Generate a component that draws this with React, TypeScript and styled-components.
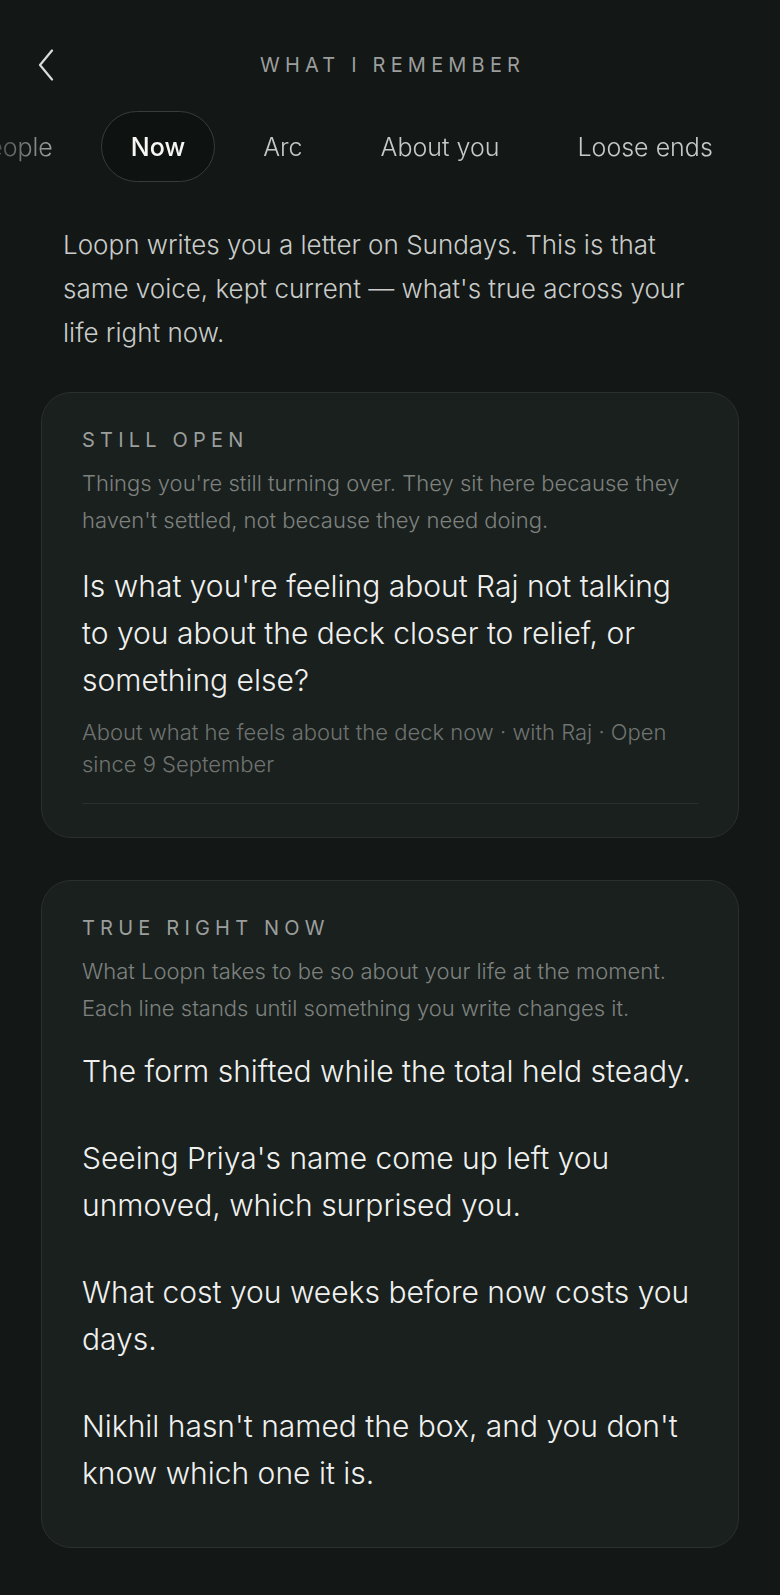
import { useLayoutEffect, useRef } from 'react';
import styled, { createGlobalStyle } from 'styled-components';

const COLORS = {
  bg: '#131715',
  card: '#1a201e',
  cardBorder: '#2b302d',
  title: '#9b9e9c',
  body: '#c9ccca',
  soft: '#7e827f',
  faint: '#6f7370',
  bright: '#f0f1ef',
};

const TABS = ['Threads', 'People', 'Now', 'Arc', 'About you', 'Loose ends'];
const ACTIVE_TAB = 2;
const ACTIVE_LEFT = 101;

const GlobalStyle = createGlobalStyle`
  html, body {
    margin: 0;
    padding: 0;
    background: ${COLORS.bg};
  }
  body {
    font-family: Inter, "Noto Sans", sans-serif;
    font-weight: 300;
    -webkit-font-smoothing: antialiased;
  }
  * { box-sizing: border-box; }
`;

const Page = styled.div`
  width: 780px;
  min-height: 1595px;
  background: ${COLORS.bg};
  padding-top: 40px;
  padding-bottom: 48px;
`;

const Header = styled.header`
  height: 50px;
  display: grid;
  grid-template-columns: 80px 1fr 80px;
  align-items: center;
`;

const BackButton = styled.button`
  width: 40px;
  height: 40px;
  margin-left: 26px;
  padding: 0;
  border: none;
  background: none;
  display: grid;
  place-items: center;
  color: #d9dcda;
`;

const Title = styled.h1`
  margin: 0;
  text-align: center;
  font-size: 20px;
  font-weight: 400;
  letter-spacing: 0.26em;
  color: ${COLORS.title};
  padding-left: 0.26em;
`;

const TabsStrip = styled.nav`
  margin-top: 21px;
  display: flex;
  gap: 18px;
  overflow-x: auto;
  padding: 0 120px 0 24px;
  scrollbar-width: none;
  mask-image: linear-gradient(to right, rgba(0, 0, 0, 0.35) 0, #000 80px);
  &::-webkit-scrollbar { display: none; }
`;

const Tab = styled.button<{ $active: boolean }>`
  flex: none;
  height: 71px;
  padding: 0 29px;
  border-radius: 36px;
  border: 1.5px solid ${p => (p.$active ? '#383d3a' : 'transparent')};
  background: ${p => (p.$active ? '#0e1210' : 'transparent')};
  color: ${p => (p.$active ? '#f6f6f4' : '#c6c9c7')};
  font-family: inherit;
  font-size: 25px;
  font-weight: ${p => (p.$active ? 500 : 300)};
  white-space: nowrap;
`;

const Intro = styled.p`
  margin: 41px 63px 0;
  font-size: 26px;
  line-height: 44px;
  color: ${COLORS.body};
`;

const Card = styled.section<{ $padBottom: number }>`
  margin: 37px 41px 0;
  padding: 35px 30px ${p => p.$padBottom}px 40px;
  background: ${COLORS.card};
  border: 1px solid ${COLORS.cardBorder};
  border-radius: 30px;
  & + & { margin-top: 42px; }
`;

const Label = styled.h2`
  margin: 0;
  font-size: 20px;
  line-height: 24px;
  font-weight: 400;
  letter-spacing: 0.26em;
  color: ${COLORS.title};
`;

const Blurb = styled.p`
  margin: 13px 10px 0 0;
  font-size: 22px;
  line-height: 37px;
  color: ${COLORS.soft};
`;

const Question = styled.p`
  margin: 24px 10px 0 0;
  font-size: 30px;
  line-height: 47px;
  color: ${COLORS.bright};
`;

const Meta = styled.p`
  margin: 12px 10px 0 0;
  font-size: 22px;
  line-height: 32px;
  color: ${COLORS.faint};
`;

const Divider = styled.hr`
  margin: 23px 10px 0 0;
  border: none;
  height: 1px;
  background: ${COLORS.cardBorder};
`;

const Truths = styled.ul`
  list-style: none;
  margin: 21px 0 0;
  padding: 0;
  display: flex;
  flex-direction: column;
  gap: 39px;
`;

const Truth = styled.li`
  font-size: 30px;
  line-height: 47.5px;
  color: ${COLORS.bright};
`;

const TRUTHS = [
  'The form shifted while the total held steady.',
  "Seeing Priya's name come up left you unmoved, which surprised you.",
  'What cost you weeks before now costs you days.',
  "Nikhil hasn't named the box, and you don't know which one it is.",
];

const App = () => {
  const strip = useRef<HTMLElement>(null);
  const active = useRef<HTMLButtonElement>(null);

  useLayoutEffect(() => {
    if (strip.current && active.current) {
      strip.current.scrollLeft = active.current.offsetLeft - strip.current.offsetLeft - ACTIVE_LEFT;
    }
  }, []);

  return (
    <Page>
      <GlobalStyle />
      <Header>
        <BackButton aria-label="Back">
          <svg width="16" height="32" viewBox="0 0 16 32" fill="none">
            <polyline points="14,1.5 2,16 14,30.5" stroke="currentColor" strokeWidth="2.2" strokeLinecap="round" strokeLinejoin="round" />
          </svg>
        </BackButton>
        <Title>WHAT I REMEMBER</Title>
        <span />
      </Header>

      <TabsStrip ref={strip}>
        {TABS.map((tab, index) => (
          <Tab key={tab} $active={index === ACTIVE_TAB} ref={index === ACTIVE_TAB ? active : undefined}>
            {tab}
          </Tab>
        ))}
      </TabsStrip>

      <Intro>
        Loopn writes you a letter on Sundays. This is that same voice, kept current — what's true across your life right now.
      </Intro>

      <Card $padBottom={33}>
        <Label>STILL OPEN</Label>
        <Blurb>Things you're still turning over. They sit here because they haven't settled, not because they need doing.</Blurb>
        <Question>Is what you're feeling about Raj not talking to you about the deck closer to relief, or something else?</Question>
        <Meta>About what he feels about the deck now · with Raj · Open since 9 September</Meta>
        <Divider />
      </Card>

      <Card $padBottom={49}>
        <Label>TRUE RIGHT NOW</Label>
        <Blurb>What Loopn takes to be so about your life at the moment. Each line stands until something you write changes it.</Blurb>
        <Truths>
          {TRUTHS.map(line => (
            <Truth key={line}>{line}</Truth>
          ))}
        </Truths>
      </Card>
    </Page>
  );
};

export default App;
